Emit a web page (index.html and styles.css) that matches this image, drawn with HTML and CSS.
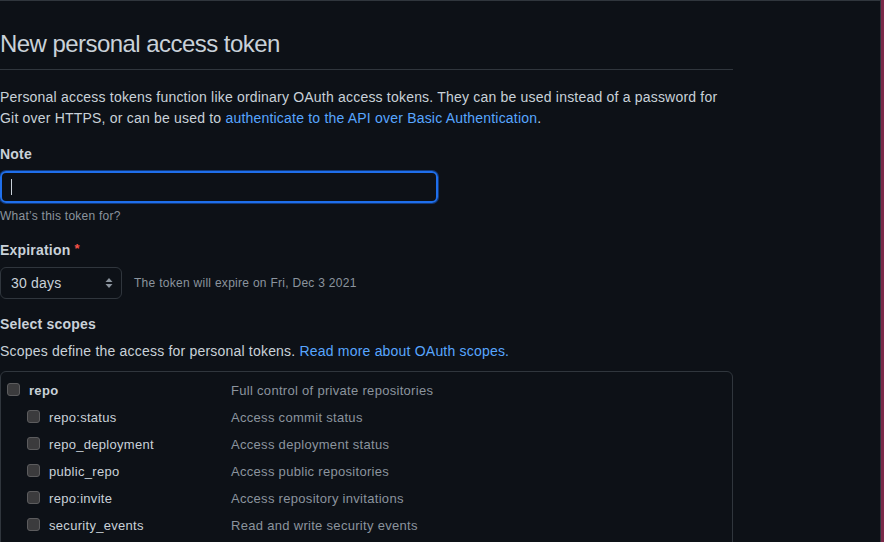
FILE: index.html
```html
<!DOCTYPE html>
<html>
<head>
  <title>New personal access token</title>
  <link rel="stylesheet" href="styles.css">
</head>
<body>
  <div class="frame">
    <div class="content">
      <h2 class="subhead">New personal access token</h2>

      <p class="intro">
        Personal access tokens function like ordinary OAuth access tokens. They can be used instead of a password for<br>
        Git over HTTPS, or can be used to <a href="#">authenticate to the API over Basic Authentication</a>.
      </p>

      <div class="field">
        <label class="field-label">Note</label>
        <div class="text-input"><span class="caret"></span></div>
        <p class="hint">What&rsquo;s this token for?</p>
      </div>

      <div class="field">
        <label class="field-label">Expiration <span class="required">*</span></label>
        <div class="expiry-row">
          <div class="select">
            <span>30 days</span>
            <svg class="select-arrows" width="8" height="12" viewBox="0 0 8 12">
              <path d="M4 1 L7.5 5 L0.5 5 Z" fill="#8b949e"/>
              <path d="M4 11 L7.5 7 L0.5 7 Z" fill="#8b949e"/>
            </svg>
          </div>
          <span class="expiry-note">The token will expire on Fri, Dec 3 2021</span>
        </div>
      </div>

      <div class="field">
        <label class="field-label">Select scopes</label>
        <p class="scopes-intro">Scopes define the access for personal tokens. <a href="#">Read more about OAuth scopes.</a></p>
      </div>

      <div class="scope-box">
        <div class="scope-row parent">
          <div class="scope-name"><span class="checkbox"></span><strong>repo</strong></div>
          <div class="scope-desc">Full control of private repositories</div>
        </div>
        <div class="scope-row child">
          <div class="scope-name"><span class="checkbox"></span>repo:status</div>
          <div class="scope-desc">Access commit status</div>
        </div>
        <div class="scope-row child">
          <div class="scope-name"><span class="checkbox"></span>repo_deployment</div>
          <div class="scope-desc">Access deployment status</div>
        </div>
        <div class="scope-row child">
          <div class="scope-name"><span class="checkbox"></span>public_repo</div>
          <div class="scope-desc">Access public repositories</div>
        </div>
        <div class="scope-row child">
          <div class="scope-name"><span class="checkbox"></span>repo:invite</div>
          <div class="scope-desc">Access repository invitations</div>
        </div>
        <div class="scope-row child">
          <div class="scope-name"><span class="checkbox"></span>security_events</div>
          <div class="scope-desc">Read and write security events</div>
        </div>
      </div>
    </div>
  </div>
</body>
</html>
```

FILE: styles.css
```css
html, body {
  margin: 0;
  height: 100%;
  background: #7a2949;
}
body {
  font-family: "Liberation Sans", Arial, sans-serif;
  font-size: 14px;
  line-height: 21px;
  letter-spacing: 0.2px;
  color: #c9d1d9;
  overflow: hidden;
}
.frame {
  width: 881px;
  height: 100%;
  box-sizing: border-box;
  background: #0d1117;
  border-top: 1px solid #30363d;
  border-right: 1px solid #30363d;
  overflow: hidden;
}
.content {
  width: 733px;
}
a {
  color: #58a6ff;
  text-decoration: none;
}
.subhead {
  margin: 25px 0 0;
  padding-bottom: 7px;
  border-bottom: 1px solid #30363d;
  font-size: 24px;
  line-height: 36px;
  font-weight: 400;
  letter-spacing: -0.55px;
  color: #c9d1d9;
}
.intro {
  margin: 17px 0 0;
  white-space: nowrap;
}
.field {
  margin-top: 15px;
}
.field-label {
  display: block;
  font-weight: bold;
  color: #c9d1d9;
}
.required {
  color: #f85149;
  font-size: 13px;
  position: relative;
  top: -2px;
}
.text-input {
  margin-top: 6px;
  width: 438px;
  height: 32px;
  box-sizing: border-box;
  border: 2px solid #1f6feb;
  border-radius: 6px;
  box-shadow: 0 0 0 1px #12397a;
  display: flex;
  align-items: center;
  padding-left: 9px;
}
.caret {
  width: 1px;
  height: 16px;
  background: #c9d1d9;
}
.hint {
  margin: 4px 0 0;
  font-size: 12px;
  line-height: 18px;
  letter-spacing: 0.25px;
  color: #8b949e;
}
.expiry-row {
  margin-top: 6px;
  display: flex;
  align-items: center;
  gap: 12px;
}
.select {
  width: 122px;
  height: 32px;
  box-sizing: border-box;
  border: 1px solid #30363d;
  border-radius: 6px;
  display: flex;
  align-items: center;
  justify-content: space-between;
  padding: 0 8px 0 10px;
  color: #c9d1d9;
}
.select-arrows {
  display: block;
}
.expiry-note {
  font-size: 12px;
  letter-spacing: 0.28px;
  color: #8b949e;
}
.scopes-intro {
  margin: 6px 0 0;
}
.scope-box {
  margin-top: 9px;
  border: 1px solid #30363d;
  border-radius: 6px;
  padding-top: 4px;
  height: 200px;
  font-size: 13px;
  letter-spacing: 0.3px;
}
.scope-row {
  display: flex;
  align-items: center;
  height: 27px;
}
.scope-row.parent {
  height: 28px;
}
.scope-name {
  width: 230px;
  box-sizing: border-box;
  display: flex;
  align-items: center;
  gap: 9px;
  color: #c9d1d9;
}
.parent .scope-name {
  padding-left: 6px;
}
.child .scope-name {
  padding-left: 26px;
}
.scope-desc {
  color: #8b949e;
}
.checkbox {
  width: 13px;
  height: 13px;
  box-sizing: border-box;
  background: #3b3b3d;
  border: 1px solid #5c5c5e;
  border-radius: 3px;
  position: relative;
  top: -1px;
}
```
